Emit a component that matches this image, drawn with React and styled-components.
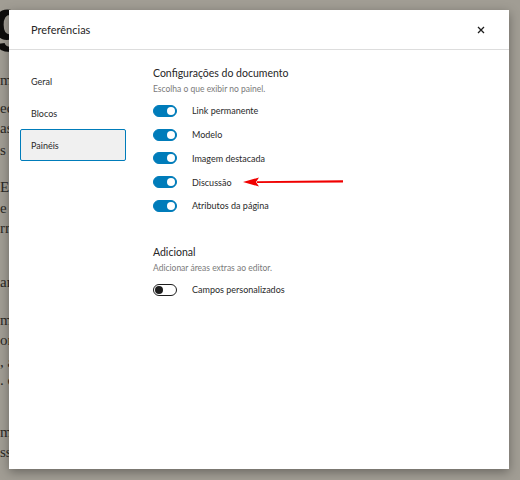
import React, { useState } from 'react'
import styled, { createGlobalStyle } from 'styled-components'

const Global = createGlobalStyle`
  html, body { margin: 0; padding: 0; }
  body {
    width: 520px;
    height: 480px;
    overflow: hidden;
    background: #a19d94;
    font-family: Lato, "Noto Sans", sans-serif;
  }
`

const Page = styled.div`
  position: relative;
  width: 520px;
  height: 480px;
  overflow: hidden;
`

const Backdrop = styled.div`
  color: #2b2926;
  font-family: "Liberation Serif", serif;
  font-size: 15px;
`

const BigLetter = styled.div`
  font-family: "Liberation Sans", sans-serif;
  font-weight: 700;
  font-size: 58px;
  line-height: 40px;
  height: 58px;
  margin-left: -7px;
  color: #0e0d0c;
`

const BgLine = styled.div`
  height: ${(p) => p.h || 20}px;
  line-height: 20px;
  white-space: pre;
`

const Modal = styled.div`
  position: absolute;
  left: 9px;
  top: 10px;
  width: 500px;
  height: 459px;
  background: #fff;
  box-shadow: 0 3px 10px rgba(0, 0, 0, 0.35);
  display: flex;
  flex-direction: column;
  color: #1e1e1e;
`

const Header = styled.div`
  height: 39px;
  border-bottom: 1px solid #dddddd;
  display: flex;
  align-items: center;
  justify-content: space-between;
  padding: 0 22px;
  flex-shrink: 0;
`

const Title = styled.h1`
  margin: 0;
  font-size: 11px;
  font-weight: 400;
  color: #262626;
`

const Close = styled.button`
  border: 0;
  background: none;
  padding: 0;
  width: 16px;
  height: 16px;
  display: flex;
  align-items: center;
  justify-content: center;
  margin-right: -2px;
`

const Body = styled.div`
  display: flex;
  flex: 1;
`

const Sidebar = styled.nav`
  width: 106px;
  padding: 15px 0 0 11px;
  display: flex;
  flex-direction: column;
`

const Tab = styled.div`
  height: 32px;
  box-sizing: border-box;
  display: flex;
  align-items: center;
  padding-left: 10px;
  font-size: 9px;
  color: #2a2a2a;
  background: ${(p) => (p.active ? '#f0f0f0' : 'transparent')};
  border: 1px solid ${(p) => (p.active ? '#007cba' : 'transparent')};
  border-radius: 2px;
`

const Content = styled.div`
  flex: 1;
  padding: 16px 0 0 27px;
`

const Section = styled.section`
  margin-bottom: 27px;
`

const SectionTitle = styled.h2`
  margin: 0;
  font-size: 10.5px;
  font-weight: 400;
  line-height: 14px;
  color: #262626;
`

const SectionHint = styled.p`
  margin: 4px 0 4px;
  font-size: 8.5px;
  line-height: 11px;
  color: #7a7a7a;
`

const Row = styled.div`
  position: relative;
  height: 23.75px;
  display: flex;
  align-items: center;
  gap: 15px;
`

const Track = styled.span`
  width: 24px;
  height: 12px;
  box-sizing: border-box;
  border-radius: 6px;
  background: ${(p) => (p.on ? '#007cba' : '#fff')};
  border: 1px solid ${(p) => (p.on ? '#007cba' : '#1e1e1e')};
  display: flex;
  align-items: center;
  justify-content: ${(p) => (p.on ? 'flex-end' : 'flex-start')};
  padding: 0 1px;
`

const Knob = styled.span`
  width: 8px;
  height: 8px;
  border-radius: 50%;
  background: ${(p) => (p.on ? '#fff' : '#1e1e1e')};
`

const Label = styled.span`
  font-size: 9px;
  color: #2a2a2a;
`

const Arrow = styled.svg`
  position: absolute;
  left: 90px;
  top: 6px;
`

function Toggle({ on }) {
  return (
    <Track on={on}>
      <Knob on={on} />
    </Track>
  )
}

const bgLines = [
  ['', 12], ['m', 28], ['ec', 20], ['as.', 22], ['s v', 37], ['Eu', 21], ['e', 20], ['rr', 54],
  ['an', 38], ['my', 20], ['or', 22], [', a', 18], ['. c', 52], ['m', 20], ['ss', 20]
]

export default function App() {
  const [docs] = useState([
    { label: 'Link permanente', on: true },
    { label: 'Modelo', on: true },
    { label: 'Imagem destacada', on: true },
    { label: 'Discussão', on: true, arrow: true },
    { label: 'Atributos da página', on: true }
  ])

  return (
    <Page>
      <Global />
      <Backdrop>
        <BigLetter>g</BigLetter>
        {bgLines.map(([t, h], i) => (
          <BgLine key={i} h={h}>{t}</BgLine>
        ))}
      </Backdrop>

      <Modal>
        <Header>
          <Title>Preferências</Title>
          <Close aria-label="Fechar">
            <svg width="10" height="10" viewBox="0 0 10 10">
              <path d="M2 2 L8 8 M8 2 L2 8" stroke="#1e1e1e" strokeWidth="1.3" />
            </svg>
          </Close>
        </Header>
        <Body>
          <Sidebar>
            <Tab>Geral</Tab>
            <Tab>Blocos</Tab>
            <Tab active>Painéis</Tab>
          </Sidebar>
          <Content>
            <Section>
              <SectionTitle>Configurações do documento</SectionTitle>
              <SectionHint>Escolha o que exibir no painel.</SectionHint>
              {docs.map((d) => (
                <Row key={d.label}>
                  <Toggle on={d.on} />
                  <Label>{d.label}</Label>
                  {d.arrow && (
                    <Arrow width="102" height="12" viewBox="0 0 102 12">
                      <path d="M14 5.3 L100 4.2 L100 6.6 L14 7 Z" fill="#f00000" />
                      <path d="M0 6 L16 1.5 L13 6 L16 10.5 Z" fill="#f00000" />
                    </Arrow>
                  )}
                </Row>
              ))}
            </Section>
            <Section>
              <SectionTitle>Adicional</SectionTitle>
              <SectionHint>Adicionar áreas extras ao editor.</SectionHint>
              <Row>
                <Toggle on={false} />
                <Label>Campos personalizados</Label>
              </Row>
            </Section>
          </Content>
        </Body>
      </Modal>
    </Page>
  )
}
